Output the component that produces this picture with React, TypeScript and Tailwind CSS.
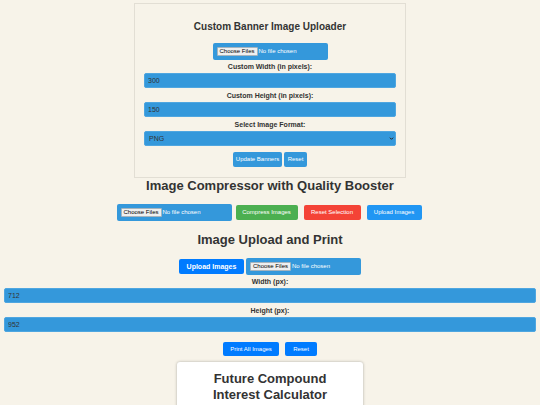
import type { ReactNode } from "react";

const fileClass =
  "block h-[17px] w-[115px] rounded-[2px] bg-[#3498db] p-1 text-[6px] leading-[9px] text-white file:mr-[1px] file:h-[9px] file:rounded-[1px] file:border file:border-solid file:border-[#a5b4be] file:bg-[#efefef] file:px-[2px] file:text-[6px] file:leading-[7px] file:text-black";
const buttonClass = "rounded-[2px] text-center text-[6px] leading-[7px] text-white";
const fieldClass =
  "block h-[15px] w-full rounded-[2px] border border-[#4fa6e0] bg-[#3498db] text-[7px] leading-[9px] text-[#333]";

function Field({ id, label, children }: { id: string; label: string; children: ReactNode }) {
  return (
    <div className="flex flex-col">
      <label htmlFor={id} className="py-[2px] text-center text-[7px] leading-[9px] font-bold">
        {label}
      </label>
      {children}
    </div>
  );
}

function SectionTitle({ children }: { children: ReactNode }) {
  return <h2 className="text-center text-[13px] leading-4 font-bold">{children}</h2>;
}

export default function App() {
  return (
    <main className="h-screen overflow-hidden bg-[#f7f3e9] px-1 pt-[3px] font-['Liberation_Sans',Arial,sans-serif] text-[#333]">
      <section className="mx-auto w-full max-w-[272px] border border-[#e2ded4] px-[9px] pt-4 pb-[10px]">
        <h1 className="text-center text-[10px] leading-[14px] font-bold">Custom Banner Image Uploader</h1>
        <div className="mt-[9px] flex justify-center">
          <input type="file" multiple aria-label="Banner images" className={fileClass} />
        </div>
        <div className="flex flex-col gap-[1px]">
          <Field id="banner-width" label="Custom Width (in pixels):">
            <input id="banner-width" type="text" defaultValue="300" className={`${fieldClass} px-[3px]`} />
          </Field>
          <Field id="banner-height" label="Custom Height (in pixels):">
            <input id="banner-height" type="text" defaultValue="150" className={`${fieldClass} px-[3px]`} />
          </Field>
          <Field id="banner-format" label="Select Image Format:">
            <div className="relative">
              <select id="banner-format" className={`${fieldClass} appearance-none px-1`}>
                <option>PNG</option>
                <option>JPEG</option>
              </select>
              <svg viewBox="0 0 5 4" className="pointer-events-none absolute top-[6px] right-[2px] h-1 w-[5px]" fill="none" stroke="#222" strokeWidth="1">
                <path d="M.9 .7 2.5 2.3 4.1 .7" />
              </svg>
            </div>
          </Field>
        </div>
        <div className="mt-[6px] flex justify-center gap-[2px]">
          <button className={`${buttonClass} h-[15px] w-[49px] bg-[#3498db]`}>Update Banners</button>
          <button className={`${buttonClass} h-[15px] w-[23px] bg-[#3498db]`}>Reset</button>
        </div>
      </section>

      <section>
        <SectionTitle>Image Compressor with Quality Booster</SectionTitle>
        <div className="mt-[10px] flex items-center justify-center">
          <input type="file" multiple aria-label="Images to compress" className={fileClass} />
          <div className="mr-[2px] ml-1 flex gap-[6px]">
            <button className={`${buttonClass} h-[15px] w-[62px] bg-[#4caf50]`}>Compress Images</button>
            <button className={`${buttonClass} h-[15px] w-[57px] bg-[#f44336]`}>Reset Selection</button>
            <button className={`${buttonClass} h-[15px] w-[55px] bg-[#2196f3]`}>Upload Images</button>
          </div>
        </div>
      </section>

      <section className="mt-[11px]">
        <SectionTitle>Image Upload and Print</SectionTitle>
        <div className="mt-[10px] flex items-center justify-center gap-[2px]">
          <button className="h-[15px] w-[65px] rounded-[2px] bg-[#007bff] text-[7px] leading-[9px] font-bold text-white">
            Upload Images
          </button>
          <input type="file" multiple aria-label="Images to print" className={fileClass} />
        </div>
        <div className="flex flex-col gap-[1px]">
          <Field id="print-width" label="Width (px):">
            <input id="print-width" type="text" defaultValue="712" className={`${fieldClass} px-[3px]`} />
          </Field>
          <Field id="print-height" label="Height (px):">
            <input id="print-height" type="text" defaultValue="952" className={`${fieldClass} px-[3px]`} />
          </Field>
        </div>
        <div className="mt-[10px] flex justify-center gap-[6px]">
          <button className={`${buttonClass} h-[14px] w-[56px] bg-[#007bff]`}>Print All Images</button>
          <button className={`${buttonClass} h-[14px] w-[32px] bg-[#007bff]`}>Reset</button>
        </div>
      </section>

      <section className="mx-auto mt-[6px] w-full max-w-[186px] rounded-[3px] bg-white px-6 pt-[9px] pb-8 shadow-[0_0_3px_rgba(0,0,0,0.3)]">
        <SectionTitle>Future Compound Interest Calculator</SectionTitle>
      </section>
    </main>
  );
}
